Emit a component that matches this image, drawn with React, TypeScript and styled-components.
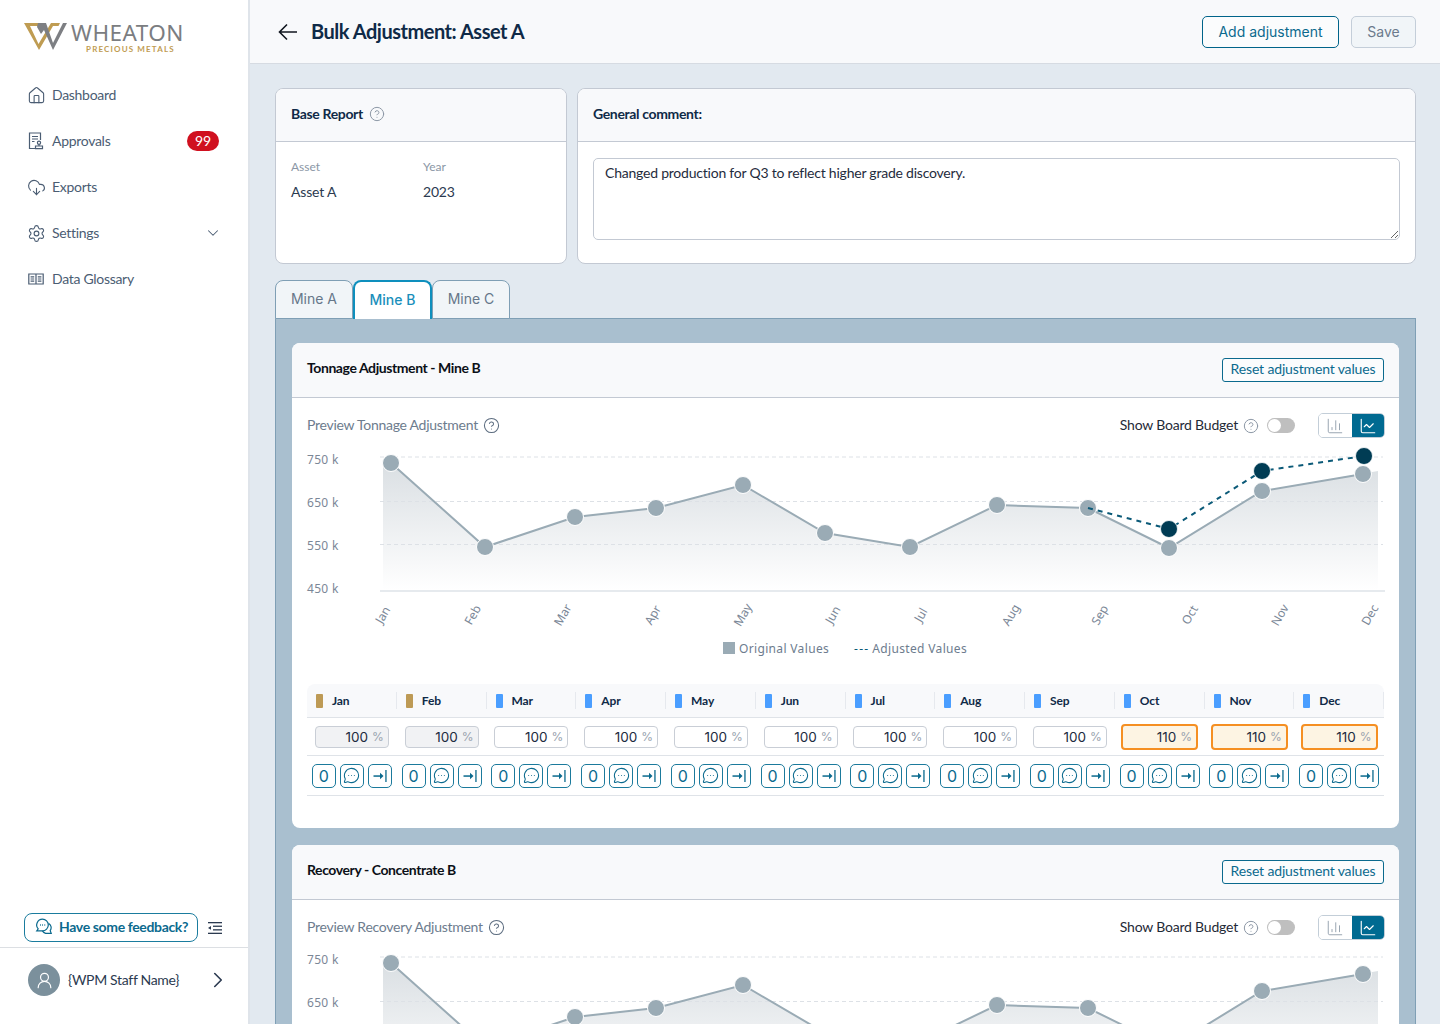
import React from "react";
import styled, { createGlobalStyle } from "styled-components";
import {
  ChartColumn,
  ChartLine,
  ChevronDown,
  ChevronRight,
  CircleHelp,
  CloudDownload,
  House,
  MessageCircleMore,
  Settings,
  UserRound,
} from "lucide-react";

const PT = `"Lato", "Liberation Sans", sans-serif`;
const UI = `"Inter", "Liberation Sans", sans-serif`;
const TEAL = "#0b6a8e";

const Global = createGlobalStyle`
  html, body { margin: 0; padding: 0; height: 1024px; overflow: hidden; background: #e2e9f0; }
  #root { height: 1024px; }
  * { box-sizing: border-box; }
`;

const Page = styled.div`
  display: flex;
  width: 1440px;
  height: 1024px;
  overflow: hidden;
  font-family: ${PT};
`;

const Sidebar = styled.aside`
  flex: 0 0 250px;
  height: 1024px;
  display: flex;
  flex-direction: column;
  background: #fff;
  border-right: 2px solid #dfe4ea;
`;

const LogoWrap = styled.div`
  display: flex;
  gap: 4px;
  padding: 23px 0 0 24px;
  height: 72px;
`;

const LogoText = styled.div`
  display: flex;
  flex-direction: column;
  align-items: center;
`;

const LogoName = styled.span`
  font-family: "Noto Sans", sans-serif;
  font-size: 22.5px;
  line-height: 20px;
  font-weight: 400;
  letter-spacing: 0.45px;
  color: #7b7d81;
`;

const LogoSub = styled.span`
  font-family: "Lato", sans-serif;
  font-size: 8px;
  line-height: 9px;
  margin-top: 2px;
  margin-left: 6px;
  font-weight: 700;
  letter-spacing: 1.15px;
  color: #bf9c52;
`;

const Nav = styled.nav`
  display: flex;
  flex-direction: column;
`;

const NavItem = styled.div`
  height: 46px;
  display: flex;
  align-items: center;
  gap: 8px;
  padding: 0 29px 0 28px;
  color: #4b5d73;
  font-size: 14px;
`;

const NavIcon = styled.span`
  flex: 0 0 16px;
  width: 16px;
  height: 16px;
  display: flex;
  align-items: center;
  justify-content: center;
  svg { flex: 0 0 auto; }
`;

const NavLabel = styled.span`
  flex: 1;
  padding-bottom: 1px;
  letter-spacing: -0.3px;
`;

const NavCaret = styled.span`
  display: flex;
  margin-right: -3px;
`;

const Badge = styled.span`
  width: 32px;
  height: 20px;
  border-radius: 10px;
  background: #d0101f;
  color: #fff;
  font-size: 14px;
  line-height: 20px;
  text-align: center;
`;

const SideFoot = styled.div`
  margin-top: auto;
`;

const FeedRow = styled.div`
  display: flex;
  align-items: center;
  gap: 10px;
  padding: 0 0 5px 24px;
`;

const FeedBtn = styled.div`
  width: 174px;
  height: 29px;
  display: flex;
  align-items: center;
  gap: 7px;
  padding: 0 0 2px 10px;
  border: 1px solid #1a7c9e;
  border-radius: 8px;
  color: ${TEAL};
  font-size: 14px;
  font-weight: 700;
  letter-spacing: -0.36px;
`;

const UserRow = styled.div`
  height: 77px;
  display: flex;
  align-items: center;
  gap: 8px;
  padding: 0 17px 12px 28px;
  border-top: 1px solid #dcdfe3;
  color: #2b3a50;
  font-size: 14px;
`;

const Avatar = styled.div`
  width: 32px;
  height: 32px;
  border-radius: 50%;
  background: #7b909c;
  display: flex;
  align-items: center;
  justify-content: center;
  color: #fff;
`;

const UserName = styled.span`
  flex: 1;
  padding-bottom: 2px;
  letter-spacing: -0.32px;
`;

const Main = styled.main`
  flex: 1;
  min-width: 0;
  display: flex;
  flex-direction: column;
`;

const Header = styled.header`
  flex: 0 0 64px;
  display: flex;
  align-items: center;
  gap: 12px;
  padding: 0 24px 0 28px;
  background: #f8f9fb;
  border-bottom: 1px solid #d6dbe2;
  color: #10161f;
`;

const Title = styled.h1`
  flex: 1;
  margin: 0 0 0 2px;
  padding-bottom: 2px;
  font-size: 20px;
  line-height: 24px;
  font-weight: 700;
  letter-spacing: -0.48px;
  color: #0f2a47;
`;

const OutlineBtn = styled.div`
  width: 137px;
  height: 32px;
  display: flex;
  align-items: center;
  justify-content: center;
  border: 1px solid #00648a;
  border-radius: 5px;
  font-family: ${UI};
  font-size: 14px;
  color: ${TEAL};
  background: #fbfcfd;
`;

const SaveBtn = styled.div`
  width: 65px;
  height: 32px;
  display: flex;
  align-items: center;
  justify-content: center;
  border: 1px solid #c4ced9;
  border-radius: 5px;
  font-family: ${UI};
  font-size: 14px;
  color: #6b7a8c;
  background: #f1f5f8;
`;

const Content = styled.div`
  padding: 24px 24px 0 25px;
  display: flex;
  flex-direction: column;
`;

const TopRow = styled.div`
  display: grid;
  grid-template-columns: 292px 1fr;
  gap: 10px;
  height: 176px;
`;

const Panel = styled.section`
  background: #fff;
  border: 1px solid #c3c9d3;
  border-radius: 8px;
  overflow: hidden;
`;

const PanelHead = styled.div`
  height: 53px;
  display: flex;
  align-items: center;
  gap: 6px;
  padding: 0 15px 3px;
  background: #f8f9fb;
  border-bottom: 1px solid #c3c9d3;
  color: #0f2a47;
  font-size: 14px;
  font-weight: 700;
  letter-spacing: -0.35px;
`;

const InfoGrid = styled.div`
  display: grid;
  grid-template-columns: 132px 1fr;
  padding: 18px 15px 0;
`;

const InfoLabel = styled.div`
  font-size: 12px;
  line-height: 14px;
  color: #8b97a6;
`;

const InfoValue = styled.div`
  font-size: 14px;
  line-height: 18px;
  margin-top: 9px;
  letter-spacing: -0.2px;
  color: #2b3a50;
`;

const CommentBody = styled.div`
  padding: 16px 15px;
`;

const Comment = styled.textarea`
  display: block;
  width: 100%;
  height: 82px;
  padding: 6px 11px;
  resize: vertical;
  border: 1px solid #c3c9d3;
  border-radius: 5px;
  outline: none;
  font-family: ${PT};
  font-size: 14px;
  line-height: 16px;
  letter-spacing: -0.22px;
  color: #1f2c3d;
`;

const Tabs = styled.div`
  display: flex;
  margin-top: 16px;
  height: 39px;
  position: relative;
  z-index: 1;
`;

const Tab = styled.div<{ $active?: boolean }>`
  width: ${(p) => (p.$active ? "79px" : "78px")};
  display: flex;
  align-items: center;
  justify-content: center;
  padding-bottom: 3px;
  font-family: ${UI};
  font-size: 14px;
  font-weight: ${(p) => (p.$active ? 500 : 400)};
  color: ${(p) => (p.$active ? "#1a8fbb" : "#66778a")};
  background: ${(p) => (p.$active ? "#fff" : "#f1f5f8")};
  border: ${(p) => (p.$active ? "2px solid #0e8fbd" : "1px solid #7f9fb5")};
  border-bottom: ${(p) => (p.$active ? "0" : "1px solid #7f9fb5")};
  border-radius: 8px 8px 0 0;
`;

const Stage = styled.div`
  margin-top: -1px;
  padding: 24px 16px 0;
  background: #a9bfcf;
  border: 1px solid #7f9fb5;
  border-bottom: 0;
  display: flex;
  flex-direction: column;
  gap: 17px;
  height: 706px;
  overflow: hidden;
`;

const Card = styled.article`
  flex: 0 0 auto;
  background: #fff;
  border-radius: 8px;
  overflow: hidden;
  padding-bottom: 32px;
`;

const CardHead = styled.div`
  height: 55px;
  display: flex;
  align-items: center;
  justify-content: space-between;
  padding: 0 15px;
  background: #f8f9fb;
  border-bottom: 1px solid #c3c9d3;
`;

const CardTitle = styled.h2`
  margin: 0 0 4px;
  font-size: 14px;
  line-height: 18px;
  font-weight: 700;
  letter-spacing: -0.42px;
  color: #0b1017;
`;

const ResetBtn = styled.div`
  width: 162px;
  height: 24px;
  display: flex;
  align-items: center;
  justify-content: center;
  padding-bottom: 3px;
  border: 1px solid #0b6a8e;
  border-radius: 3px;
  color: ${TEAL};
  font-size: 14px;
  letter-spacing: -0.15px;
  background: #fbfcfd;
`;

const ToolRow = styled.div`
  height: 25px;
  margin-top: 15px;
  display: flex;
  align-items: center;
  gap: 5px;
  padding: 0 14px 0 15px;
`;

const ToolLabel = styled.span`
  padding-bottom: 2px;
  font-size: 14px;
  color: #6d7c8e;
  letter-spacing: -0.27px;
`;

const BudgetLabel = styled.span`
  margin-left: auto;
  padding-bottom: 2px;
  font-size: 14px;
  color: #1f2a37;
  letter-spacing: -0.2px;
`;

const Toggle = styled.div`
  width: 28px;
  height: 15px;
  margin: 0 18px 0 3px;
  border-radius: 8px;
  background: #bfbfbf;
  padding: 1px;
`;

const Knob = styled.div`
  width: 13px;
  height: 13px;
  border-radius: 50%;
  background: #fff;
`;

const Segments = styled.div`
  display: flex;
  width: 67px;
  height: 25px;
  border: 1px solid #c3ced8;
  border-radius: 5px;
  overflow: hidden;
`;

const Segment = styled.div<{ $on?: boolean }>`
  flex: 1;
  display: flex;
  align-items: center;
  justify-content: center;
  background: ${(p) => (p.$on ? "#006a91" : "#fff")};
  color: ${(p) => (p.$on ? "#fff" : "#93a0ad")};
`;

const ChartSvg = styled.svg<{ $gap: number }>`
  display: block;
  margin-top: ${(p) => p.$gap}px;
  width: 1108px;
  height: 185px;
`;

const Legend = styled.div`
  height: 20px;
  margin-top: 8px;
  display: flex;
  align-items: center;
  padding-left: 431px;
  font-family: "Noto Sans", sans-serif;
  font-size: 12px;
  letter-spacing: 0.34px;
  color: #6d7c8e;
`;

const Swatch = styled.span`
  width: 12px;
  height: 12px;
  margin-right: 4px;
  background: #9aabb5;
`;

const DashMark = styled.span`
  margin: 0 3px 0 25px;
  color: #0b5a78;
  letter-spacing: 1.2px;
`;

const Table = styled.div`
  margin: 26px 15px 0 15px;
  display: grid;
  grid-template-columns: repeat(12, 1fr);
`;

const MonthHead = styled.div`
  height: 34px;
  display: flex;
  align-items: center;
  background: #f8f9fb;
  border-bottom: 1px solid #dfe3e8;
  padding-left: 9px;
  position: relative;
  color: #0f2a47;
  font-size: 12px;
  font-weight: 700;
  letter-spacing: -0.1px;
  &:first-child { border-top-left-radius: 8px; }
  &:nth-child(12) { border-top-right-radius: 8px; }
  &::after {
    content: "";
    position: absolute;
    right: 0;
    top: 8px;
    bottom: 8px;
    width: 1px;
    background: #e6e9ee;
  }
`;

const Marker = styled.span<{ $gold?: boolean }>`
  width: 7px;
  height: 14px;
  margin-right: 9px;
  border-radius: 1px;
  background: ${(p) => (p.$gold ? "#bd9a55" : "#4a9eff")};
`;

const InputCell = styled.div`
  height: 38px;
  display: flex;
  align-items: center;
  justify-content: center;
  border-bottom: 1px solid #dfe3e8;
`;

const Pct = styled.div<{ $state: "locked" | "plain" | "changed" }>`
  width: ${(p) => (p.$state === "changed" ? "77px" : "74px")};
  height: ${(p) => (p.$state === "changed" ? "26px" : "22px")};
  display: flex;
  align-items: center;
  justify-content: flex-end;
  gap: 4px;
  padding-right: 4px;
  border-radius: 4px;
  border: ${(p) => (p.$state === "changed" ? "2px solid #f58f22" : "1px solid #c9ced6")};
  background: ${(p) =>
    p.$state === "changed" ? "#fdf4e3" : p.$state === "locked" ? "#f1f2f4" : "#fff"};
  font-family: ${UI};
  font-size: 13.5px;
  color: #1c2b40;
`;

const PctSign = styled.span`
  font-size: 12px;
  color: #98a2ae;
`;

const ActionCell = styled.div`
  height: 40px;
  display: flex;
  align-items: center;
  justify-content: center;
  gap: 4px;
  border-bottom: 1px solid #dfe3e8;
`;

const SquareBtn = styled.div`
  width: 24px;
  height: 24px;
  display: flex;
  align-items: center;
  justify-content: center;
  border: 1px solid #1b7a9c;
  border-radius: 5px;
  background: #fff;
  color: ${TEAL};
  font-family: ${UI};
  font-size: 16px;
`;

/* drawings */
const LogoMark = () => (
  <svg width="43" height="28" viewBox="24 24 43 28">
    <polygon fill="#bf9c52" points="24,24 46,24 44,27 30,27 38.5,45 51,24 60,24 58.5,27 53,27 39,51" />
    <polygon fill="#7d7f83" points="37,28 38,24 46,24 53,44 63,24 67,24 53,51 44,31 41,35" />
  </svg>
);

const BackArrow = () => (
  <svg width="19" height="18" viewBox="0 0 19 18" fill="none" stroke="#10161f" strokeWidth="1.6">
    <path d="M19 9H1.5M9 1.5L1.5 9 9 16.5" />
  </svg>
);

const ApprovalIcon = () => (
  <svg width="16" height="18" viewBox="0 0 16 18" fill="none" stroke="#4b5d73" strokeWidth="1.2">
    <path d="M7 16.5H1.5V1h11v7" />
    <path d="M4 4.5h6M4 7h6M4 9.5h2.5" />
    <circle cx="11" cy="10.8" r="1.6" />
    <path d="M11 12.4v1.4M7.5 14h7v2.7h-7z" />
  </svg>
);

const GlossaryIcon = () => (
  <svg width="16" height="16" viewBox="0 0 16 16" fill="none" stroke="#4b5d73" strokeWidth="1.2">
    <path d="M8 3H.8v10H8zM8 3h7.2v10H8z" />
    <path d="M2.6 5.8h3.6M2.6 8h3.6M2.6 10.2h3.6M9.8 5.8h3.6M9.8 8h3.6M9.8 10.2h3.6" />
  </svg>
);

const FeedbackIcon = () => (
  <svg width="17" height="17" viewBox="0 0 17 17" fill="none" stroke={TEAL} strokeWidth="1.2">
    <path d="M7.5 1.2a5.8 5.8 0 0 1 0 11.6H1.8l1.4-1.9a5.8 5.8 0 0 1 4.3-9.7z" />
    <path d="M13.7 5.4a5 5 0 0 1 1.5 7.2l1 2.7h-5.6a5 5 0 0 1-3.2-2.4" />
    <path d="M5 7h.8M7.2 7h.8M9.4 7h.8" strokeWidth="1.4" />
  </svg>
);

const CollapseIcon = () => (
  <svg width="14" height="12" viewBox="0 0 14 12" fill="#2b3a50">
    <rect y="0" width="14" height="1.3" />
    <rect x="5" y="3.6" width="9" height="1.3" />
    <rect x="5" y="7.2" width="9" height="1.3" />
    <rect y="10.7" width="14" height="1.3" />
    <polygon points="0,5.9 3,4 3,7.8" />
  </svg>
);

const ToEndIcon = () => (
  <svg width="14" height="12" viewBox="0 0 14 12">
    <rect x="0.5" y="5.3" width="7.5" height="1.5" fill="#0b6a8e" />
    <polygon points="7,2.8 10.5,6 7,9.2" fill="#0b6a8e" />
    <rect x="12.3" y="0" width="1.3" height="12" fill="#0b6a8e" />
  </svg>
);

const Help = ({ size = 16, color = "#8d98a6" }: { size?: number; color?: string }) => (
  <CircleHelp size={size} color={color} strokeWidth={1.5} />
);

const MONTHS = ["Jan", "Feb", "Mar", "Apr", "May", "Jun", "Jul", "Aug", "Sep", "Oct", "Nov", "Dec"];
const POINTS: [number, number][] = [
  [391, 463], [485, 547], [575, 517], [656, 508], [743, 485], [825, 533],
  [910, 547], [997, 505], [1088, 508], [1169, 548], [1262, 491], [1363, 474],
];
const ADJUSTED: [number, number][] = [[1088, 508], [1169, 529], [1262, 471], [1364, 456]];
const LABEL_X = [383, 473, 563, 653, 743, 833, 921, 1011, 1100, 1190, 1280, 1370];
const TICKS: [string, number][] = [["750 k", 459], ["650 k", 502], ["550 k", 545], ["450 k", 588]];
const GRID = [457, 501.5, 544.5];

const toPoints = (pts: [number, number][]) => pts.map((p) => p.join(",")).join(" ");

const Chart = ({
  id,
  adjusted,
  gap,
  partial,
}: {
  id: string;
  adjusted?: boolean;
  gap: number;
  partial?: boolean;
}) => {
  const area = `383,590 383,463 ${toPoints(POINTS.slice(0, 11))} 1378,471 1378,590`;
  const ticks = partial ? TICKS.slice(0, 2) : TICKS;
  return (
    <ChartSvg $gap={gap} viewBox="292 445 1108 185">
      <defs>
        <linearGradient id={id} x1="0" y1="0" x2="0" y2="1">
          <stop offset="0" stopColor="#dadfe3" />
          <stop offset="1" stopColor="#ffffff" />
        </linearGradient>
      </defs>
      <polygon points={area} fill={`url(#${id})`} />
      {GRID.map((y) => (
        <line key={y} x1="380" x2="1383" y1={y} y2={y} stroke="#dde1e6" strokeDasharray="4 3" />
      ))}
      <line x1="380" x2="1385" y1="591" y2="591" stroke="#e6eaee" strokeWidth="2" />
      {ticks.map(([t, y]) => (
        <text key={t} x="307" y={y + 5} fontFamily="Noto Sans, sans-serif" fontSize="12" letterSpacing="0.3" fill="#7b8797">
          {t}
        </text>
      ))}
      {!partial &&
        MONTHS.map((m, i) => (
          <text
            key={m}
            x={LABEL_X[i]}
            y="619"
            textAnchor="middle"
            transform={`rotate(-60 ${LABEL_X[i]} 615)`}
            fontFamily="Noto Sans, sans-serif"
            fontSize="12"
            fill="#7b8797"
          >
            {m}
          </text>
        ))}
      <polyline points={toPoints(POINTS)} fill="none" stroke="#9aabb5" strokeWidth="2" />
      {POINTS.map(([x, y]) => (
        <circle key={x} cx={x} cy={y} r="8.5" fill="#9aabb5" stroke="#fff" strokeWidth="1" />
      ))}
      {adjusted && (
        <>
          <polyline points={toPoints(ADJUSTED)} fill="none" stroke="#0b5a78" strokeWidth="2" strokeDasharray="5 5" />
          {ADJUSTED.slice(1).map(([x, y]) => (
            <circle key={x} cx={x} cy={y} r="8.5" fill="#003c54" stroke="#fff" strokeWidth="0.8" />
          ))}
        </>
      )}
    </ChartSvg>
  );
};

const AdjustCard = ({
  id,
  title,
  preview,
  adjusted,
  chartGap,
  partial,
}: {
  id: string;
  title: string;
  preview: string;
  adjusted?: boolean;
  chartGap: number;
  partial?: boolean;
}) => (
  <Card>
    <CardHead>
      <CardTitle>{title}</CardTitle>
      <ResetBtn>Reset adjustment values</ResetBtn>
    </CardHead>
    <ToolRow>
      <ToolLabel>{preview}</ToolLabel>
      <Help size={17} color="#5d6d80" />
      <BudgetLabel>Show Board Budget</BudgetLabel>
      <Help />
      <Toggle>
        <Knob />
      </Toggle>
      <Segments>
        <Segment>
          <ChartColumn size={18} strokeWidth={1.25} />
        </Segment>
        <Segment $on>
          <ChartLine size={18} strokeWidth={1.5} />
        </Segment>
      </Segments>
    </ToolRow>
    <Chart id={id} adjusted={adjusted} gap={chartGap} partial={partial} />
    {!partial && (
      <>
        <Legend>
          <Swatch />
          Original Values
          <DashMark>---</DashMark>
          Adjusted Values
        </Legend>
        <Table>
          {MONTHS.map((m, i) => (
            <MonthHead key={m}>
              <Marker $gold={i < 2} />
              {m}
            </MonthHead>
          ))}
          {MONTHS.map((m, i) => {
            const changed = adjusted && i > 8;
            return (
              <InputCell key={m}>
                <Pct $state={changed ? "changed" : i < 2 ? "locked" : "plain"}>
                  {changed ? 110 : 100}
                  <PctSign>%</PctSign>
                </Pct>
              </InputCell>
            );
          })}
          {MONTHS.map((m) => (
            <ActionCell key={m}>
              <SquareBtn>0</SquareBtn>
              <SquareBtn>
                <MessageCircleMore size={17} strokeWidth={1.5} />
              </SquareBtn>
              <SquareBtn>
                <ToEndIcon />
              </SquareBtn>
            </ActionCell>
          ))}
        </Table>
      </>
    )}
  </Card>
);

export default function App() {
  return (
    <>
      <Global />
      <Page>
        <Sidebar>
          <LogoWrap>
            <LogoMark />
            <LogoText>
              <LogoName>WHEATON</LogoName>
              <LogoSub>PRECIOUS METALS</LogoSub>
            </LogoText>
          </LogoWrap>
          <Nav>
            <NavItem>
              <NavIcon>
                <House size={19} strokeWidth={1.4} />
              </NavIcon>
              <NavLabel>Dashboard</NavLabel>
            </NavItem>
            <NavItem>
              <NavIcon>
                <ApprovalIcon />
              </NavIcon>
              <NavLabel>Approvals</NavLabel>
              <Badge>99</Badge>
            </NavItem>
            <NavItem>
              <NavIcon>
                <CloudDownload size={19} strokeWidth={1.4} />
              </NavIcon>
              <NavLabel>Exports</NavLabel>
            </NavItem>
            <NavItem>
              <NavIcon>
                <Settings size={19} strokeWidth={1.4} />
              </NavIcon>
              <NavLabel>Settings</NavLabel>
              <NavCaret>
                <ChevronDown size={18} strokeWidth={1.4} />
              </NavCaret>
            </NavItem>
            <NavItem>
              <NavIcon>
                <GlossaryIcon />
              </NavIcon>
              <NavLabel>Data Glossary</NavLabel>
            </NavItem>
          </Nav>
          <SideFoot>
            <FeedRow>
              <FeedBtn>
                <FeedbackIcon />
                Have some feedback?
              </FeedBtn>
              <CollapseIcon />
            </FeedRow>
            <UserRow>
              <Avatar>
                <UserRound size={19} strokeWidth={1.5} />
              </Avatar>
              <UserName>{"{WPM Staff Name}"}</UserName>
              <ChevronRight size={26} strokeWidth={1.5} />
            </UserRow>
          </SideFoot>
        </Sidebar>
        <Main>
          <Header>
            <BackArrow />
            <Title>Bulk Adjustment: Asset A</Title>
            <OutlineBtn>Add adjustment</OutlineBtn>
            <SaveBtn>Save</SaveBtn>
          </Header>
          <Content>
            <TopRow>
              <Panel>
                <PanelHead>
                  Base Report <Help />
                </PanelHead>
                <InfoGrid>
                  <div>
                    <InfoLabel>Asset</InfoLabel>
                    <InfoValue>Asset A</InfoValue>
                  </div>
                  <div>
                    <InfoLabel>Year</InfoLabel>
                    <InfoValue>2023</InfoValue>
                  </div>
                </InfoGrid>
              </Panel>
              <Panel>
                <PanelHead>General comment:</PanelHead>
                <CommentBody>
                  <Comment readOnly defaultValue="Changed production for Q3 to reflect higher grade discovery." />
                </CommentBody>
              </Panel>
            </TopRow>
            <Tabs>
              <Tab>Mine A</Tab>
              <Tab $active>Mine B</Tab>
              <Tab>Mine C</Tab>
            </Tabs>
            <Stage>
              <AdjustCard
                id="g1"
                title="Tonnage Adjustment - Mine B"
                preview="Preview Tonnage Adjustment"
                adjusted
                chartGap={7}
              />
              <AdjustCard
                id="g2"
                title="Recovery - Concentrate B"
                preview="Preview Recovery Adjustment"
                chartGap={5}
                partial
              />
            </Stage>
          </Content>
        </Main>
      </Page>
    </>
  );
}
